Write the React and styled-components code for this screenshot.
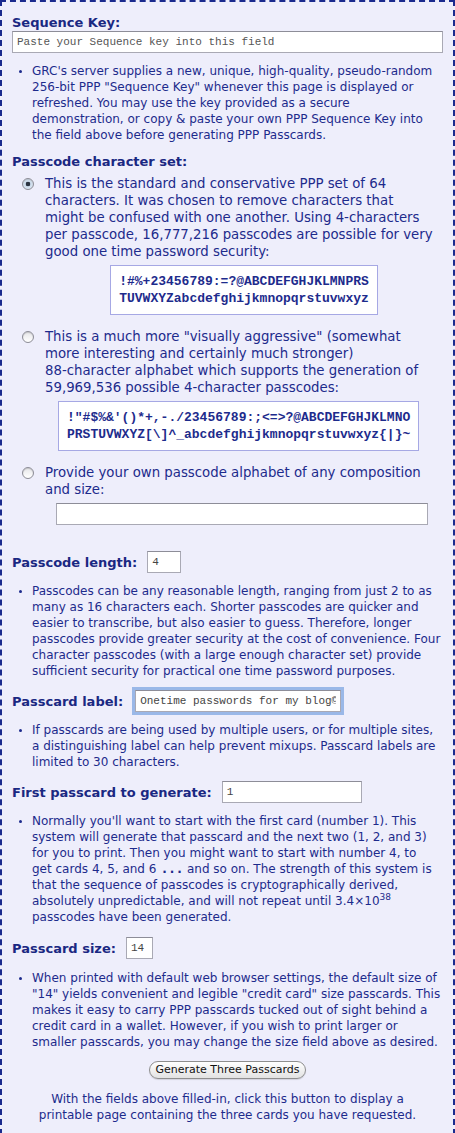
import React from "react";
import styled, { createGlobalStyle } from "styled-components";

const Global = createGlobalStyle`
  html, body { margin: 0; padding: 0; background: #ffffff; }
  body { font-family: "DejaVu Sans", Verdana, sans-serif; }
`;

const NAVY = "#1d2b8c";

const Page = styled.div`
  box-sizing: border-box;
  width: 455px;
  min-height: 1133px;
  background: #eeeefb;
  border: 2px dashed #1a2a8e;
  padding: 12px 10px 10px 10px;
  color: ${NAVY};
  font-size: 12px;
  line-height: 16px;
`;

const Title = styled.div`
  font-weight: bold;
  font-size: 13px;
  line-height: 17px;
  color: #1a2882;
  margin-top: ${(p) => p.$top || 0}px;
  white-space: nowrap;
`;

const TextField = styled.input`
  box-sizing: border-box;
  display: block;
  flex: none;
  width: ${(p) => p.$width || "100%"};
  height: ${(p) => p.$height || 22}px;
  margin: ${(p) => p.$margin || "0"};
  border: 1px solid #a9a9b4;
  border-top-color: #8d8d98;
  background: #ffffff;
  font-family: "Liberation Mono", "Courier New", monospace;
  font-size: 11px;
  color: #444;
  padding: 0 4px;
  outline: none;
  box-shadow: ${(p) => (p.$focus ? "0 0 0 3px rgba(125,165,225,0.75)" : "none")};
  &::placeholder { color: #555; }
`;

const Bullets = styled.ul`
  margin: ${(p) => p.$margin || "10px 0 0 0"};
  padding: 0 0 0 20px;
  list-style: disc;
  li::marker { font-size: 10px; }
`;

const Item = styled.li`
  white-space: nowrap;
`;

const RadioGroup = styled.div`
  display: flex;
  flex-direction: column;
  margin: 5px 0 0 10px;
`;

const Option = styled.label`
  display: flex;
  align-items: flex-start;
  gap: 11px;
  margin-top: ${(p) => p.$top || 0}px;
  font-size: 13.3px;
  line-height: 17px;
`;

const Radio = styled.span`
  flex: none;
  box-sizing: border-box;
  width: 12px;
  height: 12px;
  margin-top: 3px;
  border-radius: 50%;
  border: 1px solid #8c8c96;
  background: ${(p) =>
    p.$checked
      ? "radial-gradient(circle at 50% 50%, #2c3340 0 2px, #c9d9ea 2.6px, #eef3f8 100%)"
      : "linear-gradient(#e6e6e9, #ffffff)"};
  box-shadow: inset 0 1px 1px rgba(0,0,0,0.15);
`;

const OptionBody = styled.div`
  flex: 1;
  min-width: 0;
`;

const OptionText = styled.div`
  white-space: nowrap;
`;

const Charset = styled.div`
  display: table;
  margin: ${(p) => p.$margin || "5px auto 0 auto"};
  background: #ffffff;
  border: 1px solid #a6a8e4;
  padding: 7px 8px;
  font-family: "Liberation Mono", "Courier New", monospace;
  font-weight: bold;
  font-size: 13px;
  line-height: 17px;
  color: #1d2b8c;
  white-space: pre;
`;

const FieldRow = styled.div`
  display: flex;
  align-items: center;
  gap: ${(p) => p.$gap || 10}px;
  margin-top: ${(p) => p.$top || 0}px;
`;

const Sup = styled.sup`
  font-size: 9px;
  line-height: 0;
`;

const Dots = styled.span`
  font-weight: bold;
  letter-spacing: 3px;
  padding: 0 2px;
`;

const ButtonRow = styled.div`
  display: flex;
  justify-content: center;
  margin-top: 11px;
`;

const PillButton = styled.button`
  box-sizing: border-box;
  width: 157px;
  height: 18px;
  border-radius: 9px;
  border: 1px solid #8e8e8e;
  background: linear-gradient(#ffffff, #f1f1f1 50%, #e2e2e2);
  font-family: "DejaVu Sans", "Lucida Grande", sans-serif;
  font-size: 11px;
  line-height: 14px;
  color: #111;
  padding: 0;
  box-shadow: 0 1px 1px rgba(0,0,0,0.12);
`;

const Footer = styled.p`
  text-align: center;
  margin: 12px 0 0 0;
`;

function Lines({ lines }) {
  return lines.map((l, i) => (
    <React.Fragment key={i}>
      {l}
      {i < lines.length - 1 && <br />}
    </React.Fragment>
  ));
}

export default function App() {
  return (
    <>
      <Global />
      <Page>
        <Title>Sequence Key:</Title>
        <TextField placeholder="Paste your Sequence key into this field" />
        <Bullets>
          <Item>
            <Lines
              lines={[
                "GRC's server supplies a new, unique, high-quality, pseudo-random",
                '256-bit PPP "Sequence Key" whenever this page is displayed or',
                "refreshed. You may use the key provided as a secure",
                "demonstration, or copy & paste your own PPP Sequence Key into",
                "the field above before generating PPP Passcards.",
              ]}
            />
          </Item>
        </Bullets>

        <Title $top={10}>Passcode character set:</Title>
        <RadioGroup>
          <Option>
            <Radio $checked />
            <OptionBody>
              <OptionText>
                <Lines
                  lines={[
                    "This is the standard and conservative PPP set of 64",
                    "characters. It was chosen to remove characters that",
                    "might be confused with one another. Using 4-characters",
                    "per passcode, 16,777,216 passcodes are possible for very",
                    "good one time password security:",
                  ]}
                />
              </OptionText>
              <Charset>{"!#%+23456789:=?@ABCDEFGHJKLMNPRS\nTUVWXYZabcdefghijkmnopqrstuvwxyz"}</Charset>
            </OptionBody>
          </Option>
          <Option $top={13}>
            <Radio />
            <OptionBody>
              <OptionText>
                <Lines
                  lines={[
                    'This is a much more "visually aggressive" (somewhat',
                    "more interesting and certainly much stronger)",
                    "88-character alphabet which supports the generation of",
                    "59,969,536 possible 4-character passcodes:",
                  ]}
                />
              </OptionText>
              <Charset $margin="5px 0 0 13px">
                {"!\"#$%&'()*+,-./23456789:;<=>?@ABCDEFGHJKLMNO\nPRSTUVWXYZ[\\]^_abcdefghijkmnopqrstuvwxyz{|}~"}
              </Charset>
            </OptionBody>
          </Option>
          <Option $top={13}>
            <Radio />
            <OptionBody>
              <OptionText>
                <Lines lines={["Provide your own passcode alphabet of any composition", "and size:"]} />
              </OptionText>
              <TextField $width="372px" $margin="5px 0 0 11px" />
            </OptionBody>
          </Option>
        </RadioGroup>

        <FieldRow $top={26}>
          <Title>Passcode length:</Title>
          <TextField $width="34px" defaultValue="4" />
        </FieldRow>
        <Bullets>
          <Item>
            <Lines
              lines={[
                "Passcodes can be any reasonable length, ranging from just 2 to as",
                "many as 16 characters each. Shorter passcodes are quicker and",
                "easier to transcribe, but also easier to guess. Therefore, longer",
                "passcodes provide greater security at the cost of convenience. Four",
                "character passcodes (with a large enough character set) provide",
                "sufficient security for practical one time password purposes.",
              ]}
            />
          </Item>
        </Bullets>

        <FieldRow $top={11} $gap={12}>
          <Title>Passcard label:</Title>
          <TextField $width="206px" $focus defaultValue="Onetime passwords for my blog©" />
        </FieldRow>
        <Bullets>
          <Item>
            <Lines
              lines={[
                "If passcards are being used by multiple users, or for multiple sites,",
                "a distinguishing label can help prevent mixups. Passcard labels are",
                "limited to 30 characters.",
              ]}
            />
          </Item>
        </Bullets>

        <FieldRow $top={11}>
          <Title>First passcard to generate:</Title>
          <TextField $width="140px" defaultValue="1" />
        </FieldRow>
        <Bullets>
          <Item>
            Normally you'll want to start with the first card (number 1). This
            <br />
            system will generate that passcard and the next two (1, 2, and 3)
            <br />
            for you to print. Then you might want to start with number 4, to
            <br />
            get cards 4, 5, and 6 <Dots>...</Dots>and so on. The strength of this system is
            <br />
            that the sequence of passcodes is cryptographically derived,
            <br />
            absolutely unpredictable, and will not repeat until 3.4×10<Sup>38</Sup>
            <br />
            passcodes have been generated.
          </Item>
        </Bullets>

        <FieldRow $top={12}>
          <Title>Passcard size:</Title>
          <TextField $width="27px" defaultValue="14" />
        </FieldRow>
        <Bullets $margin="11px 0 0 0">
          <Item>
            <Lines
              lines={[
                "When printed with default web browser settings, the default size of",
                '"14" yields convenient and legible "credit card" size passcards. This',
                "makes it easy to carry PPP passcards tucked out of sight behind a",
                "credit card in a wallet. However, if you wish to print larger or",
                "smaller passcards, you may change the size field above as desired.",
              ]}
            />
          </Item>
        </Bullets>

        <ButtonRow>
          <PillButton type="button">Generate Three Passcards</PillButton>
        </ButtonRow>
        <Footer>
          With the fields above filled-in, click this button to display a
          <br />
          printable page containing the three cards you have requested.
        </Footer>
      </Page>
    </>
  );
}
